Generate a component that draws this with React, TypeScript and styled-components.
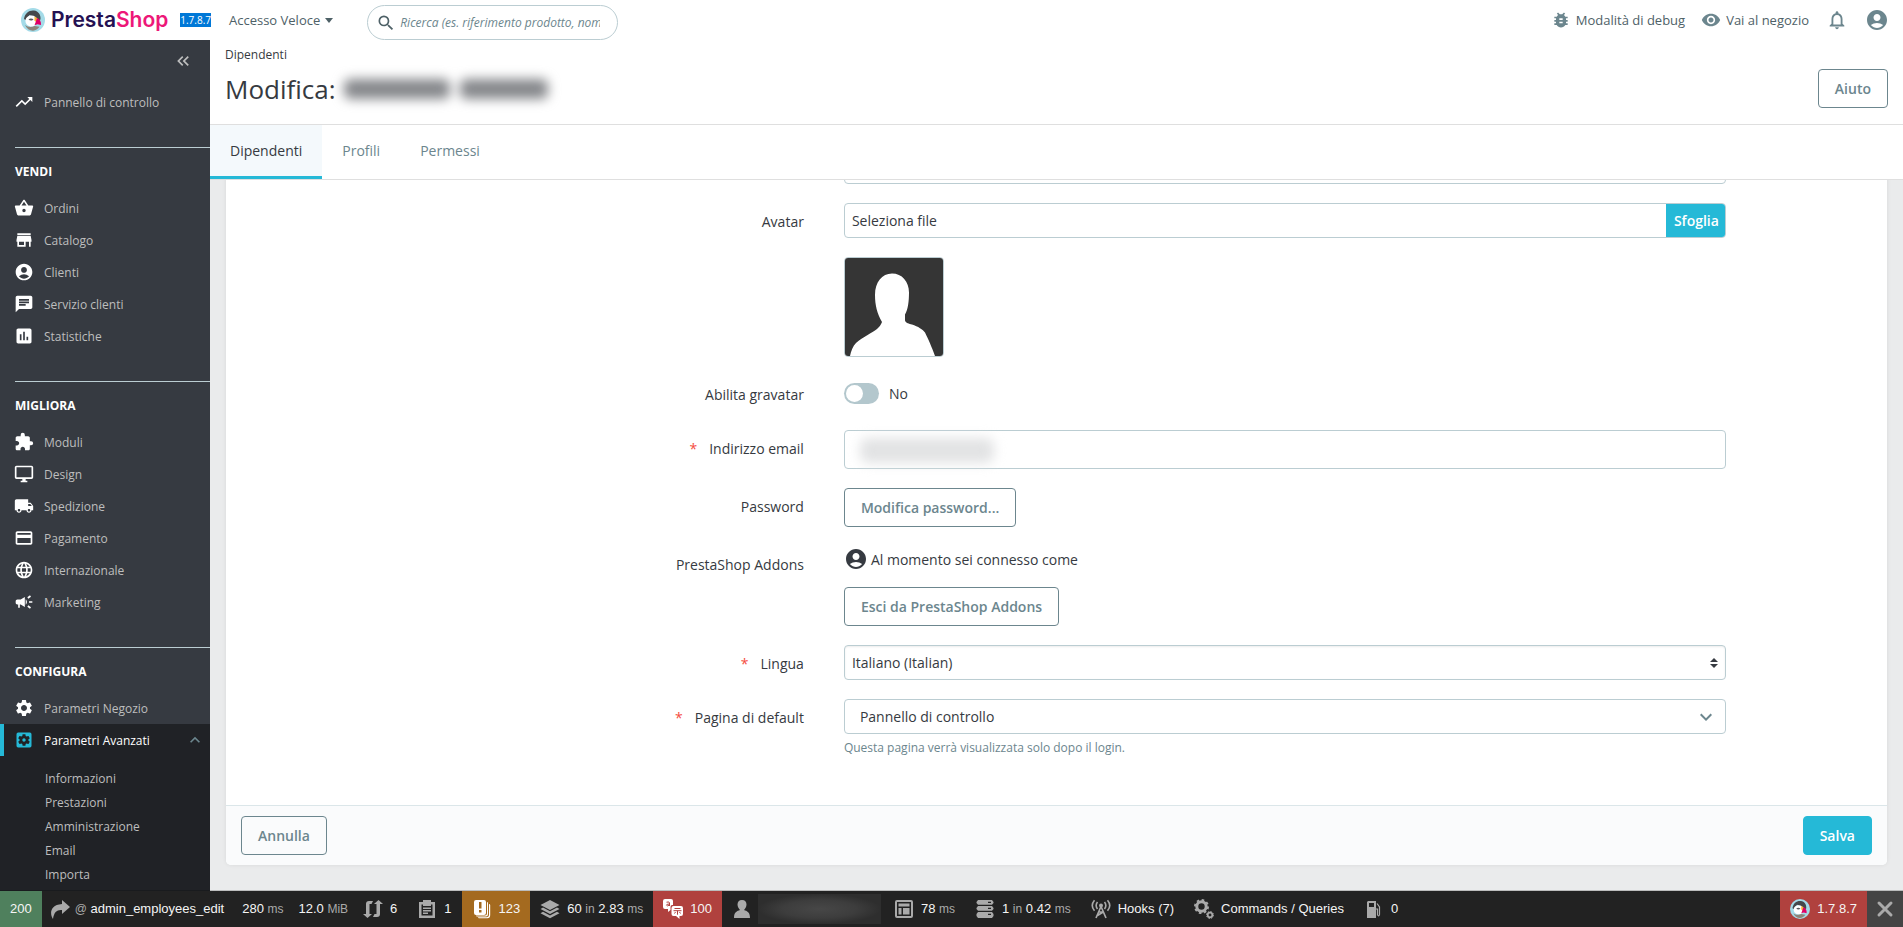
import React from 'react';
import type { ReactNode } from 'react';
import styled, { createGlobalStyle, css } from 'styled-components';
import {
  MdAccountCircle, MdAssessment, MdBugReport, MdCampaign, MdChat, MdExpandLess,
  MdExpandMore, MdExtension, MdKeyboardDoubleArrowLeft, MdLanguage, MdLocalShipping,
  MdNotificationsNone, MdOutlineDesktopWindows, MdPayment, MdRemoveRedEye, MdSearch, MdSettings,
  MdSettingsApplications, MdStore, MdTrendingUp,
} from 'react-icons/md';

const color = {
  dark: '#363a41',
  darker: '#202226',
  muted: '#6c868e',
  border: '#bbcdd2',
  accent: '#25b9d7',
  danger: '#f54c3e',
  page: '#eaebec',
};

const Global = createGlobalStyle`
  *, *::before, *::after { box-sizing: border-box; }
  body { margin: 0; color: ${color.dark}; font: 14px/21px "Open Sans", "Noto Sans", sans-serif; }
  a { color: inherit; text-decoration: none; }
  ul { list-style: none; margin: 0; padding: 0; }
  svg { display: block; flex: none; }
  button, input, select { font: inherit; color: inherit; }
  button { cursor: pointer; }
`;

const Shell = styled.div`
  display: flex;
  flex-direction: column;
  height: 100vh;
`;

/* ---------- top bar ---------- */

const TopBar = styled.header`
  display: flex;
  align-items: center;
  height: 40px;
  flex: none;
  padding-right: 14px;
  background: #fff;
  color: #4e6167;
  font-size: 13px;
`;

const Brand = styled.div`
  display: flex;
  align-items: center;
  width: 211px;
  padding-left: 21px;
`;

const BrandName = styled.a`
  display: flex;
  align-items: center;
  gap: 6px;
  color: #251152;
  font: 600 21px/24px Inter, sans-serif;
  span span { color: #ed1778; }
`;

const Version = styled.span`
  margin-left: auto;
  background: #0078d7;
  color: #fff;
  font-size: 10px;
  line-height: 14px;
`;

const QuickAccess = styled.button`
  display: flex;
  align-items: center;
  gap: 5px;
  margin-left: 18px;
  padding: 0;
  border: 0;
  background: none;
`;

const Caret = styled.span`
  border: 4px solid transparent;
  border-top: 5px solid #4e6167;
  border-bottom: 0;
`;

const Search = styled.form`
  display: flex;
  align-items: center;
  align-self: flex-end;
  gap: 4px;
  width: 251px;
  height: 35px;
  margin-left: 34px;
  padding: 0 17px 0 8px;
  border: 1px solid ${color.border};
  border-radius: 18px;
  input {
    flex: 1;
    min-width: 0;
    padding: 0;
    border: 0;
    outline: 0;
    background: none;
    font-size: 12px;
    font-style: italic;
  }
  input::placeholder { color: ${color.muted}; opacity: 1; }
`;

const TopLinks = styled.nav`
  display: flex;
  align-items: center;
  gap: 16px;
  margin-left: auto;
  svg { color: ${color.muted}; }
`;

const TopLink = styled.a`
  display: flex;
  align-items: center;
  gap: 5px;
`;

const IconButton = styled.button`
  display: flex;
  justify-content: center;
  width: 24px;
  padding: 0;
  border: 0;
  background: none;
`;

/* ---------- sidebar ---------- */

const Body = styled.div`
  display: flex;
  flex: 1;
  min-height: 0;
`;

const Sidebar = styled.nav`
  display: flex;
  flex-direction: column;
  flex: none;
  width: 210px;
  overflow: hidden;
  background: ${color.dark};
  color: #bebebe;
  font-size: 12px;
`;

const Collapse = styled.button`
  display: flex;
  align-self: flex-end;
  margin: 11px 17px 15px 0;
  padding: 0;
  border: 0;
  background: none;
`;

const MenuSection = styled.section`
  flex: none;
  margin-top: 29px;
`;

const MenuHeading = styled.h2`
  height: 45px;
  margin: 0 0 0 15px;
  padding-top: 14px;
  border-top: 1px solid ${color.border};
  color: #fff;
  font-size: 12px;
  line-height: 20px;
`;

const MenuLink = styled.a<{ $active?: boolean }>`
  display: flex;
  align-items: center;
  gap: 10px;
  height: 32px;
  flex: none;
  padding: 0 5px 0 14px;
  & > svg { color: #fff; }
  ${p => p.$active && css`
    background: ${color.darker};
    box-shadow: inset 4px 0 ${color.accent};
    color: #fff;
    & > svg { color: ${color.accent}; }
    & > svg:last-child { margin-left: auto; color: ${color.muted}; }
  `}
`;

const SubMenu = styled.ul`
  padding: 11px 0 24px 45px;
  background: ${color.darker};
  line-height: 24px;
`;

/* ---------- page head ---------- */

const Main = styled.main`
  display: flex;
  flex-direction: column;
  flex: 1;
  min-width: 0;
  background: ${color.page};
`;

const PageHead = styled.div`
  display: flex;
  align-items: flex-end;
  justify-content: space-between;
  flex: none;
  height: 85px;
  padding: 0 15px 16px;
  border-bottom: 1px solid #dfdfdf;
  background: #fff;
`;

const HeadText = styled.div`
  align-self: flex-start;
  padding-top: 6px;
`;

const Breadcrumb = styled.a`
  display: block;
  font-size: 12px;
  line-height: 18px;
`;

const Title = styled.h1`
  display: flex;
  align-items: center;
  gap: 8px;
  margin: 7px 0 0;
  font-size: 26px;
  font-weight: 400;
  line-height: 36px;
`;

const Redacted = styled.span`
  display: flex;
  gap: 10px;
  filter: blur(6px);
  i { height: 20px; border-radius: 6px; background: #85878b; }
  i:first-child { width: 106px; }
  i:last-child { width: 88px; }
`;

const Tabs = styled.nav`
  display: flex;
  flex: none;
  height: 55px;
  border-bottom: 1px solid #dfdfdf;
  background: #fff;
`;

const Tab = styled.a<{ $active?: boolean }>`
  padding: 15px 20px 0;
  color: ${p => (p.$active ? color.dark : color.muted)};
  ${p => p.$active && css`
    background: #f4f9fc;
    box-shadow: inset 0 -3px ${color.accent};
  `}
`;

/* ---------- form ---------- */

const Scroller = styled.div`
  display: flex;
  flex-direction: column-reverse;
  flex: 1;
  min-height: 0;
  padding: 0 16px 26px;
  overflow-y: auto;
  scrollbar-width: none;
`;

const Card = styled.form`
  flex: none;
  border-radius: 5px;
  background: #fff;
  box-shadow: 0 0 4px rgba(0, 0, 0, 0.08);
`;

const Fields = styled.div`
  display: flex;
  flex-direction: column;
  gap: 19px;
  padding: 20px 0 48px;
`;

const Row = styled.div`
  display: grid;
  grid-template-columns: 37.2% 53.1%;
`;

const labelStyle = css`
  padding: 8px 40px 0 0;
  text-align: right;
`;
const Label = styled.label`${labelStyle}`;
const LabelText = styled.span`${labelStyle}`;

const Star = styled.span`
  margin-right: 12px;
  color: ${color.danger};
`;

const boxStyle = css`
  display: block;
  width: 100%;
  border: 1px solid ${color.border};
  border-radius: 4px;
  background: #fff;
`;

const TextInput = styled.input<{ $tall?: boolean }>`
  ${boxStyle}
  height: ${p => (p.$tall ? 39 : 35)}px;
  padding: 0 8px;
`;

const FileBox = styled.label`
  ${boxStyle}
  display: flex;
  justify-content: space-between;
  height: 35px;
  padding-left: 7px;
  overflow: hidden;
  line-height: 33px;
`;

const Browse = styled.span`
  padding: 0 6px 0 8px;
  background: ${color.accent};
  color: #fff;
  font-weight: 600;
`;

const HiddenFile = styled.input`
  position: absolute;
  width: 1px;
  height: 1px;
  opacity: 0;
`;

const Avatar = styled.svg`
  border: 1px solid ${color.border};
  border-radius: 4px;
`;

const SwitchLine = styled.label`
  display: flex;
  align-items: center;
  gap: 10px;
  height: 35px;
`;

const Switch = styled.input`
  appearance: none;
  width: 35px;
  height: 21px;
  margin: 0;
  padding: 2px;
  border-radius: 11px;
  background: #b3c7cd;
  &::before {
    content: '';
    display: block;
    width: 17px;
    height: 17px;
    border-radius: 50%;
    background: #fff;
  }
  &:checked { background: ${color.accent}; }
  &:checked::before { margin-left: 14px; }
`;

const Overlay = styled.div`
  position: relative;
`;

const EmailBlur = styled.span`
  position: absolute;
  top: 8px;
  left: 16px;
  width: 134px;
  height: 25px;
  border-radius: 8px;
  background: #e2e3e4;
  filter: blur(6px);
`;

const Select = styled.select<{ $inset?: boolean }>`
  ${boxStyle}
  appearance: none;
  height: 35px;
  padding: 0 7px;
  ${p => p.$inset
    ? css`box-shadow: inset 0 1px 2px rgba(0, 0, 0, 0.08);`
    : css`padding-left: 15px;`}
`;

const SelectMark = styled.span<{ $right: number }>`
  position: absolute;
  top: 0;
  right: ${p => p.$right}px;
  display: flex;
  align-items: center;
  height: 35px;
  color: ${color.muted};
  pointer-events: none;
`;

const Button = styled.button<{ $primary?: boolean }>`
  height: 39px;
  padding: 0 16px;
  border: 1px solid ${p => (p.$primary ? color.accent : color.muted)};
  border-radius: 4px;
  background: ${p => (p.$primary ? color.accent : 'transparent')};
  color: ${p => (p.$primary ? '#fff' : color.muted)};
  font-weight: 600;
`;

const Connected = styled.div`
  display: flex;
  align-items: center;
  gap: 3px;
  height: 26px;
  margin-bottom: 15px;
`;

const Help = styled.small`
  display: block;
  margin-top: 5px;
  color: ${color.muted};
  font-size: 12px;
  line-height: 18px;
`;

const CardFooter = styled.footer`
  display: flex;
  align-items: center;
  justify-content: space-between;
  height: 60px;
  padding: 0 15px;
  border-top: 1px solid #dbe6e9;
  border-radius: 0 0 5px 5px;
  background: #fafbfc;
`;

/* ---------- debug toolbar ---------- */

const DebugBar = styled.footer`
  position: relative;
  display: flex;
  flex: none;
  height: 36px;
  background: #222;
  box-shadow: 0 -1px 0 rgba(0, 0, 0, 0.2);
  color: #f5f5f5;
  font: 13px/36px "Liberation Sans", Arial, sans-serif;
  white-space: pre;
`;

const DebugItem = styled.a<{ $bg?: string; $gap?: number; $pad?: number; $push?: boolean }>`
  display: flex;
  align-items: center;
  gap: ${p => p.$gap ?? 7}px;
  padding: 0 ${p => p.$pad ?? 10}px;
  margin-left: ${p => (p.$push ? 'auto' : 0)};
  background: ${p => p.$bg ?? 'none'};
  svg { color: ${p => (p.$bg && p.$bg !== '#444' ? '#fff' : '#aaa')}; }
  small { color: #aaa; font-size: 12px; }
`;

const DebugUser = styled.span`
  width: 123px;
  height: 30px;
  margin: 0 -7px 0 -1px;
  background: radial-gradient(closest-side, #474747, #3d3d3d 60%, #2e2e2e);
`;

/* ---------- drawings ---------- */

const Puffin = ({ size }: { size: number }) => (
  <svg width={size} height={size} viewBox="0 0 24 24" aria-hidden="true">
    <circle cx="12" cy="12" r="12" fill="#a4dbe8" />
    <path d="M3 11C4 5 8 2 13 2.500c4.500.5 7 4.500 6.500 9l-2 1-3-3-6-2.500-4 5z" fill="#45484b" />
    <path d="M4.500 12c.5-3 3-4.500 6-4.500 3 0 5 1.500 5.500 4.500.4 4-2 6.500-5.500 6.500S4 16 4.500 12z" fill="#fff" />
    <path d="M7.500 11.500c1.500-1.500 3.500-1.200 5-.2-1 1.500-3.500 1.700-5 .2z" fill="#54585c" />
    <path d="M13.500 8.500 17 10.500l-1.500 4-2-2z" fill="#f9b233" />
    <path d="M16 10c2.700.9 4.300 3.500 4 7l-3.500-.8-3 1 1.200-3.200z" fill="#df0067" />
    <path d="M4 17c3 2.300 6.500 2.300 9.500 1l5 .8c-1.500 2.300-4 3.700-6.500 3.900-3.500 0-6.500-2.200-8-5.700z" fill="#8d8478" />
  </svg>
);

const BasketIcon = ({ size }: { size: number }) => (
  <svg width={size} height={size} viewBox="0 0 24 24" fill="currentColor" aria-hidden="true">
    <path d="M17.210 9l-4.380-6.560c-.190-.280-.510-.420-.830-.420-.320 0-.640.140-.830.430L6.790 9H2c-.550 0-1 .450-1 1 0 .090.010.180.040.270l2.540 9.270c.230.840 1 1.460 1.920 1.460h13c.920 0 1.690-.620 1.930-1.460l2.540-9.270L23 10c0-.550-.450-1-1-1h-4.790zM9 9l3-4.400L15 9H9zm3 8c-1.100 0-2-.900-2-2s.900-2 2-2 2 .900 2 2-.900 2-2 2z" />
  </svg>
);

const Glyph = ({ children }: { children: ReactNode }) => (
  <svg width="20" height="20" viewBox="0 0 20 20" fill="currentColor" aria-hidden="true">{children}</svg>
);

const ForwardGlyph = () => <Glyph><path d="M12 1l8 7-8 7v-4C7 10.500 4 13 3 20 0 16-1 6 12 5z" /></Glyph>;
const LoopGlyph = () => (
  <Glyph>
    <path d="M3 15V5q0-3 3-3h4l-1.500 3H6.500v10H9l-4.500 4L0 15z" />
    <path d="M17 5v10q0 3-3 3h-4l1.500-3h2V5H11l4.500-4L20 5z" />
  </Glyph>
);
const ClipboardGlyph = () => (
  <Glyph>
    <path fillRule="evenodd" d="M2 3h4V1h8v2h4v16H2zm2.500 2.500v11h11v-11H14V7H6V5.500zM6 8.500h8V10H6zm0 2.500h8v1.500H6zm0 2.500h5V15H6z" />
  </Glyph>
);
const LogGlyph = () => (
  <Glyph>
    <path fillRule="evenodd" d="M4 1h8q2 0 2 2v11q0 2-2 2H4q-2 0-2-2V3q0-2 2-2zm3 2v6.500h2.500V3zm0 8v2.500h2.500V11z" />
    <path d="M15 3q1 0 1 1v11q0 2.500-2 2.500H5q-1 0-1-1h9q2 0 2-2zM17 5q1.200 0 1.200 1v10q0 3.200-3 3.200H7q-1 0-1-1h8.500q2.500 0 2.500-2.700z" />
  </Glyph>
);
const LayersGlyph = () => (
  <Glyph>
    <path d="M10 1l9.500 5-9.500 5L.5 6z" />
    <path d="M.5 10l2.500-1.400 7 3.600 7-3.600 2.500 1.400-9.500 5z" />
    <path d="M.5 14.200L3 12.800l7 3.700 7-3.700 2.500 1.400-9.500 5z" />
  </Glyph>
);
const TranslateGlyph = () => (
  <Glyph>
    <path d="M2 0h6q2 0 2 2v4H9q-1.500 0-1.500 2v3L5 13v-3H2q-2 0-2-2V2q0-2 2-2z" />
    <path d="M10.500 7H18q2 0 2 2v6q0 2-2 2h-1.500v3L13 17h-2.500q-2 0-2-2V9q0-2 2-2z" />
    <path d="M3.500 3.200q3-.9 3 .8v3M6.500 5q-3.200 0-3 1.200.5 1.400 3-.2M11.500 9.500h6M10.500 11.700h8M14.500 11.700v4M12.500 13l-1 1.500M16.500 13l1 1.500" fill="none" stroke="#b0413e" strokeWidth="1" />
  </Glyph>
);
const UserGlyph = () => <Glyph><path d="M10 1c3 0 4.500 2 4.500 4.500S13 10 12 11c3 1 6 2 6 8H2c0-6 3-7 6-8-1-1-2.500-3-2.500-5.500S7 1 10 1z" /></Glyph>;
const LayoutGlyph = () => (
  <Glyph><path fillRule="evenodd" d="M3 1h14q2 0 2 2v14q0 2-2 2H3q-2 0-2-2V3q0-2 2-2zm0 2v14h14V3zm1.500 1.500h11v3h-11zm0 4.500h3v6.500h-3zm4.500 0h6.500v6.500H9z" /></Glyph>
);
const DatabaseGlyph = () => (
  <Glyph><path fillRule="evenodd" d="M3 1h14l1.500 2v1L17 5.800H3L1.500 4V3zm0 6h14L18.500 9v1L17 11.800H3L1.500 10V9zm0 6h14l1.500 2v2L17 19H3l-1.500-2v-2zM13 2.800V4h3V2.800zm0 6V10h3V8.800zm0 6V16h3v-1.200z" /></Glyph>
);
const AntennaGlyph = () => (
  <Glyph>
    <path d="M10 7.500L5 19M10 7.500L15 19M7.800 13h4.400M6.500 16.500l5.700-3.500" fill="none" stroke="currentColor" strokeWidth="1.700" />
    <circle cx="10" cy="6.500" r="2" />
    <path d="M6.500 10Q3.800 6.500 6.500 3M13.500 10q2.700-3.500 0-7M3.500 11.800q-4.500-5.300 0-10.600M16.500 11.800q4.500-5.300 0-10.600" fill="none" stroke="currentColor" strokeWidth="1.600" />
  </Glyph>
);
const GearsGlyph = () => (
  <Glyph>
    <circle cx="7.500" cy="7.500" r="4.700" fill="none" stroke="currentColor" strokeWidth="3" />
    <circle cx="7.500" cy="7.500" r="6.600" fill="none" stroke="currentColor" strokeWidth="1.800" strokeDasharray="2.600 2.584" />
    <circle cx="16" cy="16" r="2.300" fill="none" stroke="currentColor" strokeWidth="1.700" />
    <circle cx="16" cy="16" r="3.500" fill="none" stroke="currentColor" strokeWidth="1" strokeDasharray="1.500 1.249" />
  </Glyph>
);
const FuelGlyph = () => (
  <Glyph>
    <path fillRule="evenodd" d="M4 2h8v17H3V3zm1 2v4h5V4z" />
    <path d="M12 10h1.500v6q1.500 2 2-.5V8L13 4.500" fill="none" stroke="currentColor" strokeWidth="1.200" />
  </Glyph>
);
const CloseGlyph = () => <Glyph><path d="M4 4l12 12M16 4L4 16" stroke="currentColor" strokeWidth="3" strokeLinecap="round" /></Glyph>;

/* ---------- data ---------- */

const menu = [
  { title: 'VENDI', items: [
    [BasketIcon, 'Ordini'], [MdStore, 'Catalogo'], [MdAccountCircle, 'Clienti'],
    [MdChat, 'Servizio clienti'], [MdAssessment, 'Statistiche'],
  ] },
  { title: 'MIGLIORA', items: [
    [MdExtension, 'Moduli'], [MdOutlineDesktopWindows, 'Design'], [MdLocalShipping, 'Spedizione'],
    [MdPayment, 'Pagamento'], [MdLanguage, 'Internazionale'], [MdCampaign, 'Marketing'],
  ] },
  { title: 'CONFIGURA', items: [[MdSettings, 'Parametri Negozio']] },
] as const;

const subMenu = ['Informazioni', 'Prestazioni', 'Amministrazione', 'Email', 'Importa'];

export default function App() {
  return (
    <Shell>
      <Global />
      <TopBar>
        <Brand>
          <BrandName href="#"><Puffin size={24} /><span>Presta<span>Shop</span></span></BrandName>
          <Version>1.7.8.7</Version>
        </Brand>
        <QuickAccess type="button">Accesso Veloce<Caret /></QuickAccess>
        <Search>
          <MdSearch size={20} />
          <input type="text" aria-label="Ricerca" placeholder="Ricerca (es. riferimento prodotto, nome cliente...)" />
        </Search>
        <TopLinks>
          <TopLink href="#"><MdBugReport size={20} />Modalità di debug</TopLink>
          <TopLink href="#"><MdRemoveRedEye size={20} />Vai al negozio</TopLink>
          <IconButton type="button" aria-label="Notifiche"><MdNotificationsNone size={22} /></IconButton>
          <IconButton type="button" aria-label="Profilo"><MdAccountCircle size={24} /></IconButton>
        </TopLinks>
      </TopBar>

      <Body>
        <Sidebar>
          <Collapse type="button" aria-label="Riduci menu"><MdKeyboardDoubleArrowLeft size={20} /></Collapse>
          <MenuLink href="#"><MdTrendingUp size={20} />Pannello di controllo</MenuLink>
          {menu.map(section => (
            <MenuSection key={section.title}>
              <MenuHeading>{section.title}</MenuHeading>
              {section.items.map(([Icon, text]) => (
                <MenuLink href="#" key={text}><Icon size={20} />{text}</MenuLink>
              ))}
            </MenuSection>
          ))}
          <MenuLink href="#" $active>
            <MdSettingsApplications size={20} />Parametri Avanzati<MdExpandLess size={20} />
          </MenuLink>
          <SubMenu>
            {subMenu.map(text => <li key={text}><a href="#">{text}</a></li>)}
          </SubMenu>
        </Sidebar>

        <Main>
          <PageHead>
            <HeadText>
              <Breadcrumb href="#">Dipendenti</Breadcrumb>
              <Title>Modifica:<Redacted aria-hidden="true"><i /><i /></Redacted></Title>
            </HeadText>
            <Button type="button">Aiuto</Button>
          </PageHead>
          <Tabs>
            <Tab href="#" $active>Dipendenti</Tab>
            <Tab href="#">Profili</Tab>
            <Tab href="#">Permessi</Tab>
          </Tabs>

          <Scroller>
            <Card>
              <Fields>
                <Row>
                  <span />
                  <TextInput type="text" aria-label="Cognome" />
                </Row>
                <Row>
                  <Label htmlFor="avatar">Avatar</Label>
                  <div>
                    <HiddenFile type="file" id="avatar" />
                    <FileBox htmlFor="avatar">Seleziona file<Browse>Sfoglia</Browse></FileBox>
                  </div>
                </Row>
                <Row>
                  <span />
                  <Avatar width="100" height="100" viewBox="0 0 98 98" role="img" aria-label="Avatar">
                    <path d="M0 0h98v98H0z" fill="#353535" />
                    <path d="M47 15.500c10 0 17 8 17 19 0 9-1 17-4 22v6c1 3 4 3 7 4 6 2 11 5 13 8 3 6 7 15 10 23.500H5c1-5 3-10 6-13 7-6 16-10 21-14 2-2 4-4 5-7-5-9-7-17-7-27 0-13 7-21.500 17-21.500z" fill="#fff" />
                  </Avatar>
                </Row>
                <Row>
                  <Label htmlFor="gravatar">Abilita gravatar</Label>
                  <SwitchLine><Switch type="checkbox" id="gravatar" />No</SwitchLine>
                </Row>
                <Row>
                  <Label htmlFor="email"><Star>*</Star>Indirizzo email</Label>
                  <Overlay>
                    <TextInput type="email" id="email" $tall />
                    <EmailBlur />
                  </Overlay>
                </Row>
                <Row>
                  <LabelText>Password</LabelText>
                  <div><Button type="button">Modifica password...</Button></div>
                </Row>
                <Row>
                  <LabelText>PrestaShop Addons</LabelText>
                  <div>
                    <Connected><MdAccountCircle size={24} />Al momento sei connesso come</Connected>
                    <Button type="button">Esci da PrestaShop Addons</Button>
                  </div>
                </Row>
                <Row>
                  <Label htmlFor="lang"><Star>*</Star>Lingua</Label>
                  <Overlay>
                    <Select id="lang" $inset><option>Italiano (Italian)</option></Select>
                    <SelectMark $right={8}>
                      <svg width="8" height="10" viewBox="0 0 8 10" fill={color.dark}><path d="M4 0l4 4H0zM0 6h8l-4 4z" /></svg>
                    </SelectMark>
                  </Overlay>
                </Row>
                <Row>
                  <Label htmlFor="home"><Star>*</Star>Pagina di default</Label>
                  <Overlay>
                    <Select id="home"><option>Pannello di controllo</option></Select>
                    <SelectMark $right={8}><MdExpandMore size={24} /></SelectMark>
                    <Help>Questa pagina verrà visualizzata solo dopo il login.</Help>
                  </Overlay>
                </Row>
              </Fields>
              <CardFooter>
                <Button type="button">Annulla</Button>
                <Button type="button" $primary>Salva</Button>
              </CardFooter>
            </Card>
          </Scroller>
        </Main>
      </Body>

      <DebugBar>
        <DebugItem href="#" $bg="#4f805d">200</DebugItem>
        <DebugItem href="#" $gap={5} $pad={8}><ForwardGlyph /><span><small>@</small> admin_employees_edit</span></DebugItem>
        <DebugItem href="#"><span>280 <small>ms</small></span></DebugItem>
        <DebugItem href="#" $pad={5}><span>12.0 <small>MiB</small></span></DebugItem>
        <DebugItem href="#"><LoopGlyph />6</DebugItem>
        <DebugItem href="#"><ClipboardGlyph />1</DebugItem>
        <DebugItem href="#" $bg="#a46a1f"><LogGlyph />123</DebugItem>
        <DebugItem href="#"><LayersGlyph /><span>60 <small>in</small> 2.83 <small>ms</small></span></DebugItem>
        <DebugItem href="#" $bg="#b0413e"><TranslateGlyph />100</DebugItem>
        <DebugItem href="#"><UserGlyph /><DebugUser /></DebugItem>
        <DebugItem href="#"><LayoutGlyph /><span>78 <small>ms</small></span></DebugItem>
        <DebugItem href="#"><DatabaseGlyph /><span>1 <small>in</small> 0.42 <small>ms</small></span></DebugItem>
        <DebugItem href="#"><AntennaGlyph />Hooks (7)</DebugItem>
        <DebugItem href="#"><GearsGlyph />Commands / Queries</DebugItem>
        <DebugItem href="#"><FuelGlyph />0</DebugItem>
        <DebugItem href="#" $bg="#b0413e" $push><Puffin size={20} />1.7.8.7</DebugItem>
        <DebugItem href="#" $bg="#444" $pad={8} aria-label="Chiudi"><CloseGlyph /></DebugItem>
      </DebugBar>
    </Shell>
  );
}
